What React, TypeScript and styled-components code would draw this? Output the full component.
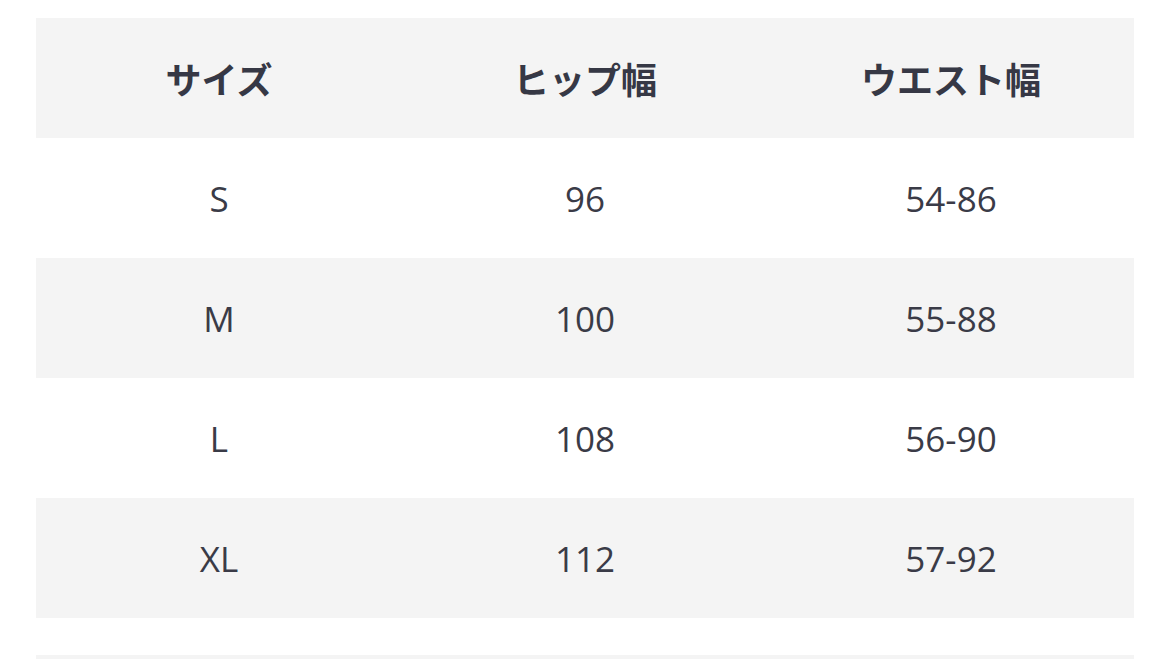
import React from "react";
import styled, { createGlobalStyle } from "styled-components";

const GlobalStyle = createGlobalStyle`
  html, body {
    margin: 0;
    padding: 0;
    background: #ffffff;
    overflow: hidden;
  }
  body {
    font-family: "Open Sans", "Noto Sans CJK JP", sans-serif;
    color: #3a3b47;
  }
`;

const Page = styled.div`
  width: 1170px;
  height: 659px;
  padding: 18px 36px 0;
  box-sizing: border-box;
  overflow: hidden;
`;

const Table = styled.table`
  width: 100%;
  border-collapse: collapse;
  table-layout: fixed;
  margin-bottom: 37px;
`;

const HeadCell = styled.th`
  height: 120px;
  padding: 0;
  text-align: center;
  vertical-align: middle;
  font-family: "Noto Sans CJK JP", sans-serif;
  font-weight: 700;
  font-size: 36px;
  color: #363845;
  background: #f4f4f4;
`;

const Row = styled.tr<{ $shade: boolean }>`
  background: ${(p) => (p.$shade ? "#f4f4f4" : "#ffffff")};
`;

const Cell = styled.td`
  height: 120px;
  padding: 0;
  text-align: center;
  vertical-align: middle;
  font-family: "Open Sans", sans-serif;
  font-size: 35px;
  color: #3a3b47;
`;

const NextBlock = styled.div`
  height: 120px;
  background: #f4f4f4;
`;

const rows = [
  ["S", "96", "54-86"],
  ["M", "100", "55-88"],
  ["L", "108", "56-90"],
  ["XL", "112", "57-92"],
];

export default function App() {
  return (
    <>
      <GlobalStyle />
      <Page>
        <Table>
          <thead>
            <tr>
              <HeadCell>サイズ</HeadCell>
              <HeadCell>ヒップ幅</HeadCell>
              <HeadCell>ウエスト幅</HeadCell>
            </tr>
          </thead>
          <tbody>
            {rows.map((r, i) => (
              <Row key={r[0]} $shade={i % 2 === 1}>
                {r.map((v, j) => (
                  <Cell key={j}>{v}</Cell>
                ))}
              </Row>
            ))}
          </tbody>
        </Table>
        <NextBlock />
      </Page>
    </>
  );
}
